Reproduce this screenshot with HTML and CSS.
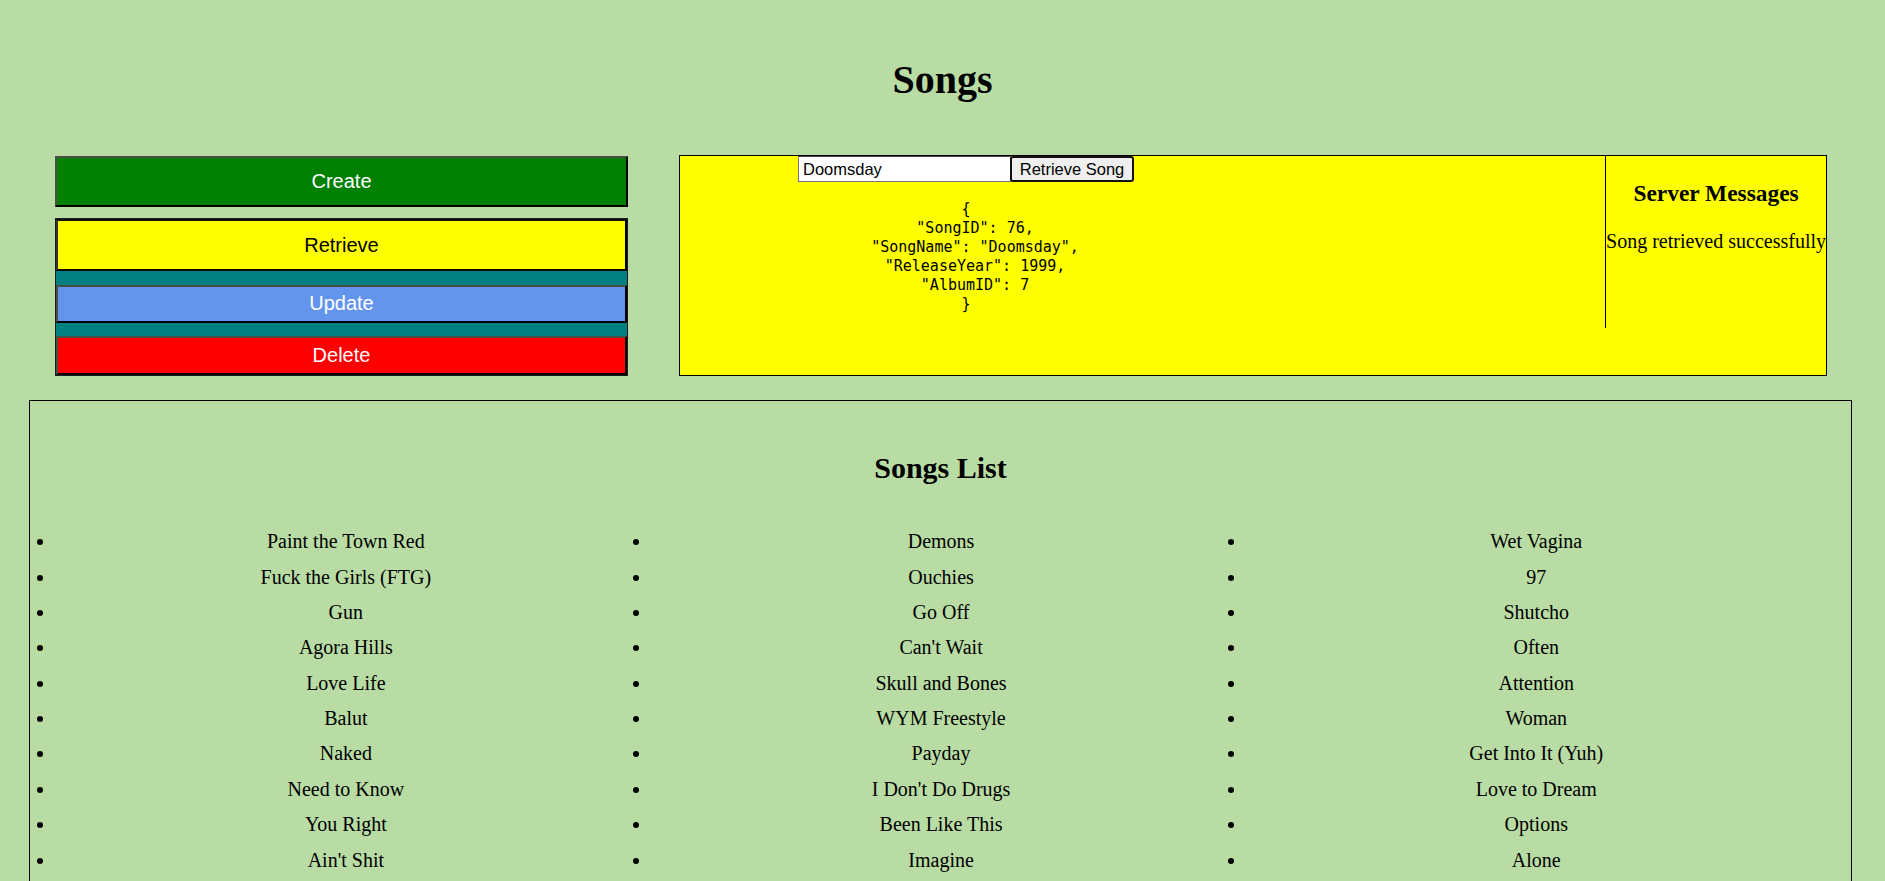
FILE: index.html
```html
<!DOCTYPE html>
<html lang="en">
<head>
<meta charset="utf-8">
<title>Songs</title>
<link rel="stylesheet" href="styles.css">
</head>
<body>
<header class="page-header">
  <h1 class="page-title">Songs</h1>
</header>
<main>
  <section class="top-row">
    <div class="crud-column">
      <button class="btn btn-create" type="button">Create</button>
      <div class="crud-group">
        <button class="btn btn-retrieve" type="button">Retrieve</button>
        <button class="btn btn-update" type="button">Update</button>
        <button class="btn btn-delete" type="button">Delete</button>
      </div>
    </div>
    <div class="workspace">
      <div class="retrieve-area">
        <form class="retrieve-form">
          <input class="song-input" type="text" value="Doomsday">
          <button class="retrieve-btn" type="button">Retrieve Song</button>
        </form>
        <pre class="json-output">{
  "SongID": 76,
  "SongName": "Doomsday",
  "ReleaseYear": 1999,
  "AlbumID": 7
}</pre>
      </div>
      <aside class="server-panel">
        <h3 class="server-title">Server Messages</h3>
        <p class="server-text">Song retrieved successfully</p>
      </aside>
    </div>
  </section>
  <section class="songs-box">
    <h2 class="songs-title">Songs List</h2>
    <ul class="songs-list">
      <li>Paint the Town Red</li>
      <li>Fuck the Girls (FTG)</li>
      <li>Gun</li>
      <li>Agora Hills</li>
      <li>Love Life</li>
      <li>Balut</li>
      <li>Naked</li>
      <li>Need to Know</li>
      <li>You Right</li>
      <li>Ain't Shit</li>
      <li>Demons</li>
      <li>Ouchies</li>
      <li>Go Off</li>
      <li>Can't Wait</li>
      <li>Skull and Bones</li>
      <li>WYM Freestyle</li>
      <li>Payday</li>
      <li>I Don't Do Drugs</li>
      <li>Been Like This</li>
      <li>Imagine</li>
      <li>Wet Vagina</li>
      <li>97</li>
      <li>Shutcho</li>
      <li>Often</li>
      <li>Attention</li>
      <li>Woman</li>
      <li>Get Into It (Yuh)</li>
      <li>Love to Dream</li>
      <li>Options</li>
      <li>Alone</li>
    </ul>
  </section>
</main>
</body>
</html>
```
FILE: styles.css
```css
html {
  scrollbar-width: none;
}

body {
  margin: 0;
  background: #b9dca5;
  font-family: "Liberation Serif", "Times New Roman", serif;
  font-size: 20px;
  color: #000;
}

.page-header {
  padding-top: 57px;
}

.page-title {
  margin: 0;
  font-size: 40px;
  line-height: 46px;
  font-weight: bold;
  text-align: center;
}

.top-row {
  display: flex;
  align-items: stretch;
  gap: 51px;
  margin-top: 52px;
  padding: 0 58px 0 55px;
}

.crud-column {
  flex: 0 0 573px;
  display: flex;
  flex-direction: column;
  gap: 11px;
  padding-top: 1px;
}

.btn {
  display: block;
  width: 100%;
  margin: 0;
  font-family: "Liberation Sans", Arial, sans-serif;
  font-size: 20px;
  line-height: 23px;
  border-style: solid;
  border-width: 2px;
  border-color: #4a4f46 #000 #000 #4a4f46;
  box-sizing: border-box;
  cursor: pointer;
}

.btn-create {
  background: #008000;
  color: #fff;
  padding: 12px 0;
}

.crud-group {
  display: flex;
  flex-direction: column;
  gap: 13.5px;
  background: #008080;
  border: 1px solid #1c1c1c;
}

.btn-retrieve {
  background: #ffff00;
  color: #000;
  padding: 12.5px 0;
  border-color: #111 #000 #000 #333;
}

.btn-update {
  background: #6495ed;
  color: #fff;
  padding: 5.5px 0;
}

.btn-delete {
  background: #ff0000;
  color: #fff;
  padding: 6px 0;
}

.workspace {
  flex: 1;
  display: flex;
  justify-content: space-between;
  align-items: flex-start;
  background: #ffff00;
  border: 1px solid #000;
}

.retrieve-area {
  flex: 0 0 572px;
  display: flex;
  flex-direction: column;
  align-items: center;
}

.retrieve-form {
  display: flex;
  margin: 0;
}

.song-input {
  width: 213px;
  height: 26px;
  box-sizing: border-box;
  margin: 0;
  padding: 1px 4px;
  border: 1px solid #767676;
  border-top-color: #444;
  background: #fff;
  font-family: "Liberation Sans", Arial, sans-serif;
  font-size: 16.5px;
  color: #000;
}

.retrieve-btn {
  width: 124px;
  height: 26px;
  box-sizing: border-box;
  margin: 0 0 0 -1px;
  padding: 0;
  border: 2px solid #111;
  border-radius: 3px;
  background: #efefef;
  font-family: "Liberation Sans", Arial, sans-serif;
  font-size: 16.5px;
  color: #000;
}

.json-output {
  margin: 18px 0 0;
  font-family: "DejaVu Sans Mono", "Liberation Mono", monospace;
  font-size: 15px;
  line-height: 19px;
  text-align: center;
}

.server-panel {
  flex: none;
  border-left: 1px solid #000;
  text-align: center;
  padding-bottom: 75px;
}

.server-title {
  margin: 23.5px 0 23px;
  font-size: 23.4px;
  line-height: 27px;
  font-weight: bold;
}

.server-text {
  margin: 0;
  line-height: 23px;
}

.songs-box {
  margin: 24px 33px 0 29px;
  border: 1px solid #000;
  padding: 25px 0 30px;
}

.songs-title {
  margin: 25px 0 0;
  font-size: 30px;
  line-height: 34.5px;
  font-weight: bold;
  text-align: center;
}

.songs-list {
  display: grid;
  grid-template-columns: repeat(3, 1fr);
  grid-template-rows: repeat(10, auto);
  grid-auto-flow: column;
  margin: 38.5px 0 0;
  padding: 0 9px 0 26.4px;
  list-style: disc outside;
}

.songs-list li {
  padding: 6.2px 16.3px 6.2px 0;
  line-height: 23px;
  text-align: center;
}
```
